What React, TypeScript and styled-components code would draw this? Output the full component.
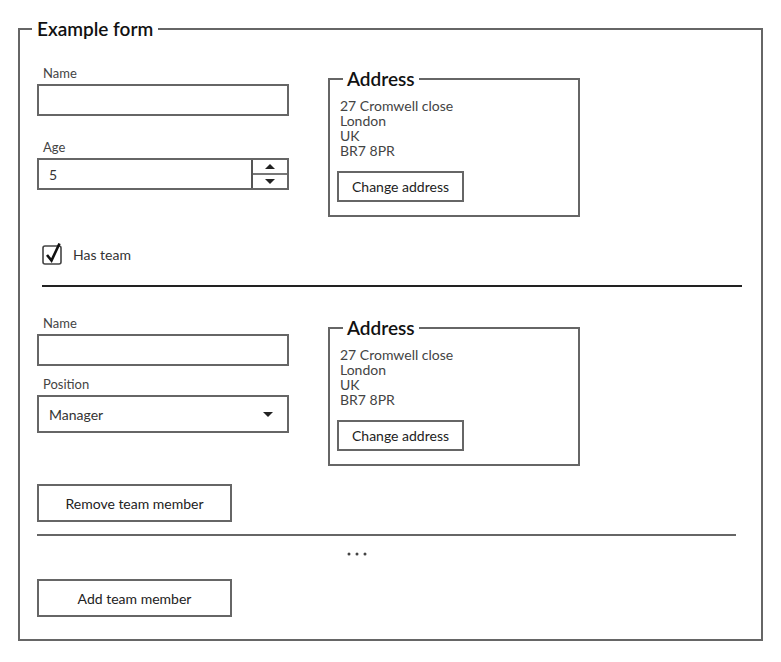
import styled, { createGlobalStyle } from "styled-components";

const GlobalStyle = createGlobalStyle`
    body {
        margin: 0;
        background: #fff;
        font-family: Lato, "Open Sans", sans-serif;
        color: #333;
    }
`;

const Page = styled.div`
    padding: 18px 18px 20px 18px;
`;

const OuterSet = styled.fieldset`
    margin: 0;
    border: 2px solid #666;
    padding: 25px 17px 22px 17px;
    min-width: 0;
`;

const OuterLegend = styled.legend`
    font-size: 19px;
    font-weight: 600;
    line-height: 22px;
    color: #111;
    padding: 0 5px;
    margin-left: -5px;
`;

const Row = styled.div`
    display: flex;
    align-items: flex-start;
    gap: 39px;
`;

const Column = styled.div`
    width: 252px;
    display: flex;
    flex-direction: column;
`;

const Label = styled.label<{ $top?: number }>`
    display: block;
    font-size: 13px;
    line-height: 16px;
    color: #444;
    padding-left: 6px;
    margin-top: ${(p) => p.$top ?? 0}px;
    margin-bottom: 3px;
`;

const TextInput = styled.input`
    box-sizing: border-box;
    width: 100%;
    height: 32px;
    border: 2px solid #666;
    border-radius: 0;
    padding: 0 10px;
    font: inherit;
    font-size: 14px;
    outline: none;
`;

const NumberBox = styled.div`
    box-sizing: border-box;
    display: flex;
    height: 32px;
    border: 2px solid #666;
`;

const NumberValue = styled.div`
    flex: 1;
    display: flex;
    align-items: center;
    padding-left: 10px;
    font-size: 14px;
    color: #333;
`;

const Spinner = styled.div`
    width: 34px;
    display: flex;
    flex-direction: column;
    border-left: 2px solid #555;
`;

const SpinButton = styled.div<{ $down?: boolean }>`
    flex: 1;
    display: flex;
    align-items: center;
    justify-content: center;
    border-top: ${(p) => (p.$down ? "2px solid #777" : "none")};
`;

const SelectBox = styled.div`
    box-sizing: border-box;
    height: 38px;
    border: 2px solid #666;
    display: flex;
    align-items: center;
    justify-content: space-between;
    padding: 0 14px 0 10px;
    font-size: 14px;
    color: #333;
`;

const AddressSet = styled.fieldset<{ $top: number }>`
    box-sizing: border-box;
    width: 252px;
    margin: ${(p) => p.$top}px 0 0 0;
    border: 2px solid #666;
    padding: 8px 10px 13px 10px;
    min-width: 0;
`;

const AddressLegend = styled.legend`
    font-size: 19px;
    font-weight: 600;
    line-height: 22px;
    color: #111;
    padding: 0 4px;
    margin-left: 3px;
`;

const AddressLine = styled.div`
    font-size: 14px;
    line-height: 15px;
    color: #444;
`;

const Button = styled.button<{ $w: number; $h: number }>`
    box-sizing: border-box;
    width: ${(p) => p.$w}px;
    height: ${(p) => p.$h}px;
    border: 2px solid #666;
    border-radius: 0;
    background: #fff;
    font-family: inherit;
    font-size: 14px;
    color: #222;
    cursor: pointer;
    padding: 0;
`;

const AddressButton = styled(Button)`
    margin-top: 13px;
    margin-left: -3px;
`;

const CheckRow = styled.div`
    display: flex;
    align-items: center;
    gap: 9px;
    margin: 25px 0 0 5px;
    font-size: 14px;
    color: #333;
`;

const Rule = styled.div<{ $color: string; $left: number; $right: number; $top: number }>`
    height: 2px;
    background: ${(p) => p.$color};
    margin: ${(p) => p.$top}px ${(p) => p.$right}px 0 ${(p) => p.$left}px;
`;

const Section = styled.div<{ $top: number }>`
    margin-top: ${(p) => p.$top}px;
`;

const ButtonRow = styled.div<{ $top: number }>`
    margin-top: ${(p) => p.$top}px;
`;

const Dots = styled.div`
    display: flex;
    padding-left: 310px;
    margin-top: 15px;
    height: 6px;
    align-items: center;
`;

const Address = ({ top }: { top: number }) => (
    <AddressSet $top={top}>
        <AddressLegend>Address</AddressLegend>
        <AddressLine>27 Cromwell close</AddressLine>
        <AddressLine>London</AddressLine>
        <AddressLine>UK</AddressLine>
        <AddressLine>BR7 8PR</AddressLine>
        <AddressButton $w={127} $h={31}>Change address</AddressButton>
    </AddressSet>
);

const Triangle = ({ down }: { down?: boolean }) => (
    <svg width="10" height="5" viewBox="0 0 10 5">
        <polygon points={down ? "0,0 10,0 5,5" : "0,5 10,5 5,0"} fill="#222" />
    </svg>
);

const App = () => {
    return (
        <Page>
            <GlobalStyle />
            <OuterSet>
                <OuterLegend>Example form</OuterLegend>
                <Row>
                    <Column>
                        <Label>Name</Label>
                        <TextInput />
                        <Label $top={23}>Age</Label>
                        <NumberBox>
                            <NumberValue>5</NumberValue>
                            <Spinner>
                                <SpinButton>
                                    <Triangle />
                                </SpinButton>
                                <SpinButton $down>
                                    <Triangle down />
                                </SpinButton>
                            </Spinner>
                        </NumberBox>
                    </Column>
                    <Address top={3} />
                </Row>
                <CheckRow>
                    <svg width="22" height="24" viewBox="0 0 22 24">
                        <rect x="1" y="4" width="18" height="18" rx="2" fill="none" stroke="#444" strokeWidth="1.6" />
                        <path d="M5 13 L9.5 18.5 L17.5 1.5" fill="none" stroke="#111" strokeWidth="2.6" strokeLinejoin="miter" />
                    </svg>
                    Has team
                </CheckRow>
                <Rule $color="#222" $left={5} $right={2} $top={19} />
                <Section $top={28}>
                    <Row>
                        <Column>
                            <Label>Name</Label>
                            <TextInput />
                            <Label $top={10}>Position</Label>
                            <SelectBox>
                                Manager
                                <Triangle down />
                            </SelectBox>
                        </Column>
                        <Address top={2} />
                    </Row>
                </Section>
                <ButtonRow $top={18}>
                    <Button $w={195} $h={38}>Remove team member</Button>
                </ButtonRow>
                <Rule $color="#666" $left={0} $right={8} $top={12} />
                <Dots>
                    <svg width="20" height="4" viewBox="0 0 20 4">
                        <circle cx="2" cy="2" r="1.5" fill="#444" />
                        <circle cx="10" cy="2" r="1.5" fill="#444" />
                        <circle cx="18" cy="2" r="1.5" fill="#444" />
                    </svg>
                </Dots>
                <ButtonRow $top={22}>
                    <Button $w={195} $h={38}>Add team member</Button>
                </ButtonRow>
            </OuterSet>
        </Page>
    );
};

export default App;
